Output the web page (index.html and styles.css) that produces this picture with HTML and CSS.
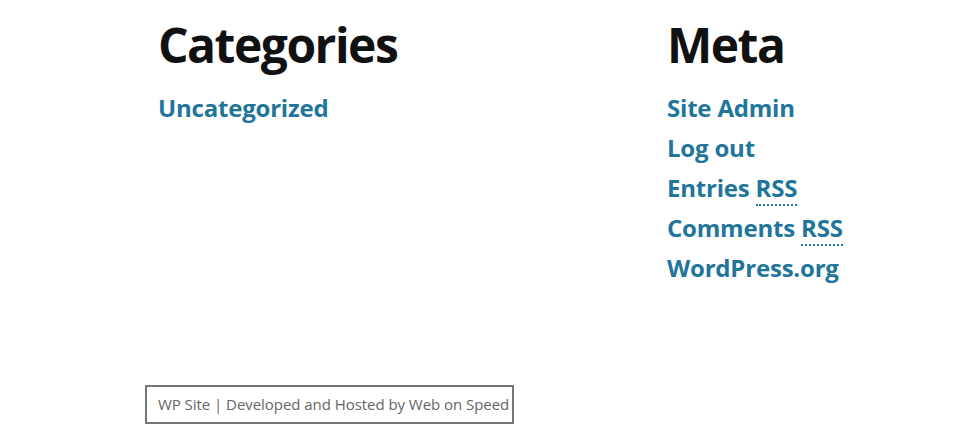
FILE: index.html
```html
<!DOCTYPE html>
<html lang="en">
<head>
    <meta charset="UTF-8">
    <meta name="viewport" content="width=device-width, initial-scale=1.0">
    <title>WP Site</title>
    <link rel="stylesheet" href="styles.css">
</head>
<body>
<div class="widgets">
    <section class="widget">
        <h2>Categories</h2>
        <ul>
            <li><a href="#">Uncategorized</a></li>
        </ul>
    </section>

    <section class="widget">
        <h2>Meta</h2>
        <ul>
            <li><a href="#">Site Admin</a></li>
            <li><a href="#">Log out</a></li>
            <li><a href="#">Entries <abbr title="Really Simple Syndication">RSS</abbr></a></li>
            <li><a href="#">Comments <abbr title="Really Simple Syndication">RSS</abbr></a></li>
            <li><a href="#">WordPress.org</a></li>
        </ul>
    </section>
</div>

<!-- footer -->
<footer class="site-info">
    <span>WP Site | Developed and Hosted by Web on Speed</span>
</footer>
</body>
</html>
```

FILE: styles.css
```css
body {
    font-family: 'Open Sans', 'Noto Sans', sans-serif;
    margin: 0;
    background: #fff;
    color: #111;
}

.widgets {
    display: grid;
    grid-template-columns: 509px 1fr;
    padding: 15px 0 0 158px;
    height: 371px;
    box-sizing: border-box;
}

.widget h2 {
    font-size: 48px;
    font-weight: 700;
    line-height: 60px;
    margin: 0 0 13px;
    letter-spacing: -1.5px;
}

.widget ul {
    list-style: none;
    margin: 0;
    padding: 0;
}

.widget li {
    line-height: 40px;
    font-size: 24px;
    font-weight: 700;
}

.widget a {
    color: #21759b;
    text-decoration: none;
    letter-spacing: -0.2px;
}

abbr {
    text-decoration: none;
    border-bottom: 2px dotted #21759b;
}

.site-info {
    display: inline-block;
    margin-left: 145px;
    margin-top: 14px;
    padding: 0 3px 0 11px;
    border: 2px solid #777;
    height: 35px;
    line-height: 35px;
    font-size: 15px;
    letter-spacing: -0.05px;
    color: #666;
}
```
